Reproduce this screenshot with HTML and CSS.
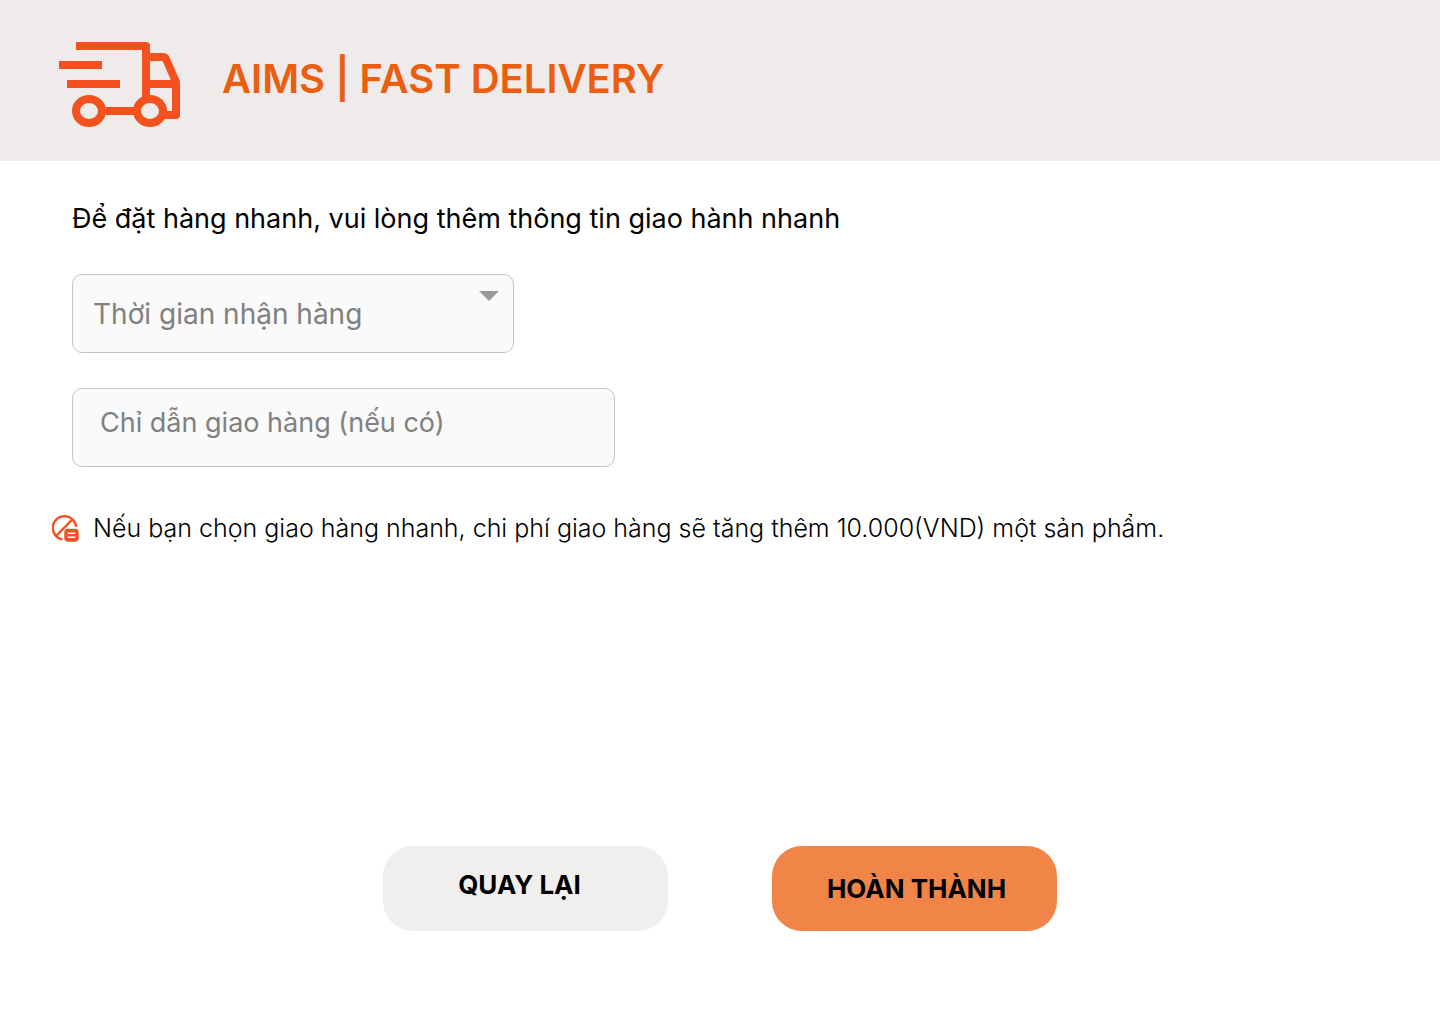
FILE: index.html
```html
<!DOCTYPE html>
<html lang="vi">
<head>
<meta charset="utf-8">
<meta name="viewport" content="width=device-width, initial-scale=1">
<title>AIMS | Fast Delivery</title>
<link rel="stylesheet" href="styles.css">
</head>
<body>
<header class="header">
  <svg class="truck" viewBox="0 0 124 88" fill="none" stroke="currentColor" stroke-width="8" aria-hidden="true">
    <path d="M18 5H84Q88 5 88 9V60M1 24H44M9 43H62"/>
    <path d="M90 16H105Q107 16 108 18L118 41V74H106M90 43H118M48 70H76" stroke-linejoin="round"/>
    <ellipse cx="31" cy="70" rx="13" ry="12"/>
    <ellipse cx="92" cy="70" rx="13" ry="12"/>
    <path d="M84 1H88Q92 1 92 5V9H84Z" fill="currentColor" stroke="none"/>
  </svg>
  <h1 class="title">AIMS | FAST DELIVERY</h1>
</header>
<form class="form">
  <h2 class="intro">Để đặt hàng nhanh, vui lòng thêm thông tin giao hành nhanh</h2>
  <div class="select-wrap">
    <select class="field select" aria-label="Thời gian nhận hàng">
      <option>Thời gian nhận hàng</option>
    </select>
    <svg class="arrow" viewBox="0 0 20 10" aria-hidden="true"><path d="M0 0H20L10 10Z"/></svg>
  </div>
  <input class="field instructions" type="text" aria-label="Chỉ dẫn giao hàng" placeholder="Chỉ dẫn giao hàng (nếu có)">
  <div class="note">
    <svg class="note-icon" viewBox="0 0 26 26" fill="none" stroke="currentColor" stroke-width="2.300" aria-hidden="true">
      <path d="M10 23.500A11.300 11.300 0 1 1 23.300 11.500M4 20L20 4"/>
      <rect x="13" y="14.500" width="11.500" height="10" rx="2" fill="currentColor"/>
      <path d="M15 17.500H22.500M15 21.500H22.500" stroke="#fff" stroke-width="1.500"/>
    </svg>
    <p class="note-text">Nếu bạn chọn giao hàng nhanh, chi phí giao hàng sẽ tăng thêm 10.000(VND) một sản phẩm.</p>
  </div>
  <div class="actions">
    <button class="button back" type="button">QUAY LẠI</button>
    <button class="button finish" type="submit">HOÀN THÀNH</button>
  </div>
</form>
</body>
</html>
```
FILE: styles.css
```css
* {
  box-sizing: border-box;
}

body {
  display: flex;
  flex-direction: column;
  min-height: 100vh;
  margin: 0;
  background: #fff;
  color: #000;
  font-family: Inter, "Noto Sans", sans-serif;
}

.header {
  display: flex;
  align-items: flex-start;
  gap: 40px;
  padding: 41px 58px 32px;
  background: #efebea;
}

.truck {
  flex: none;
  width: 124px;
  height: 88px;
  color: #f4511e;
}

.title {
  margin: 0;
  color: #ec5e0f;
  font-size: 40px;
  font-weight: 600;
  line-height: 76px;
}

.form {
  display: flex;
  flex: 1;
  flex-direction: column;
  align-items: flex-start;
  padding: 40px 72px 93px;
}

.intro {
  margin: 0 0 37px;
  font-size: 27px;
  font-weight: 400;
  line-height: 36px;
}

.select-wrap {
  position: relative;
  width: 442px;
  max-width: 100%;
  margin-bottom: 35px;
}

.field {
  width: 100%;
  height: 79px;
  border: 1px solid #c4c4c4;
  border-radius: 10px;
  background: #fafafa;
  color: #808080;
  font: 400 28px/36px Inter, "Noto Sans", sans-serif;
}

.select {
  display: block;
  padding: 0 20px;
  appearance: none;
}

.arrow {
  position: absolute;
  top: 17px;
  right: 15px;
  width: 20px;
  height: 10px;
  fill: #999;
  pointer-events: none;
}

.instructions {
  max-width: 543px;
  padding: 0 27px 10px;
  font-size: 27px;
}

.instructions::placeholder {
  color: #808080;
  opacity: 1;
}

.note {
  display: flex;
  align-items: center;
  gap: 14px;
  margin: 43px 0 40px -20px;
}

.note-icon {
  flex: none;
  width: 27px;
  height: 27px;
  color: #f4511e;
}

.note-text {
  margin: 0;
  font-size: 25px;
  font-weight: 300;
  line-height: 36px;
}

.actions {
  display: flex;
  flex-wrap: wrap;
  align-self: center;
  gap: 104px;
  margin-top: auto;
}

.button {
  width: 285px;
  height: 85px;
  border: 0;
  border-radius: 30px;
  color: #000;
  font: 700 26px/36px Inter, "Noto Sans", sans-serif;
}

.back {
  padding: 0 12px 8px 0;
  background: #f0efed;
}

.finish {
  padding: 0 0 0 4px;
  background: #f08547;
}
```
